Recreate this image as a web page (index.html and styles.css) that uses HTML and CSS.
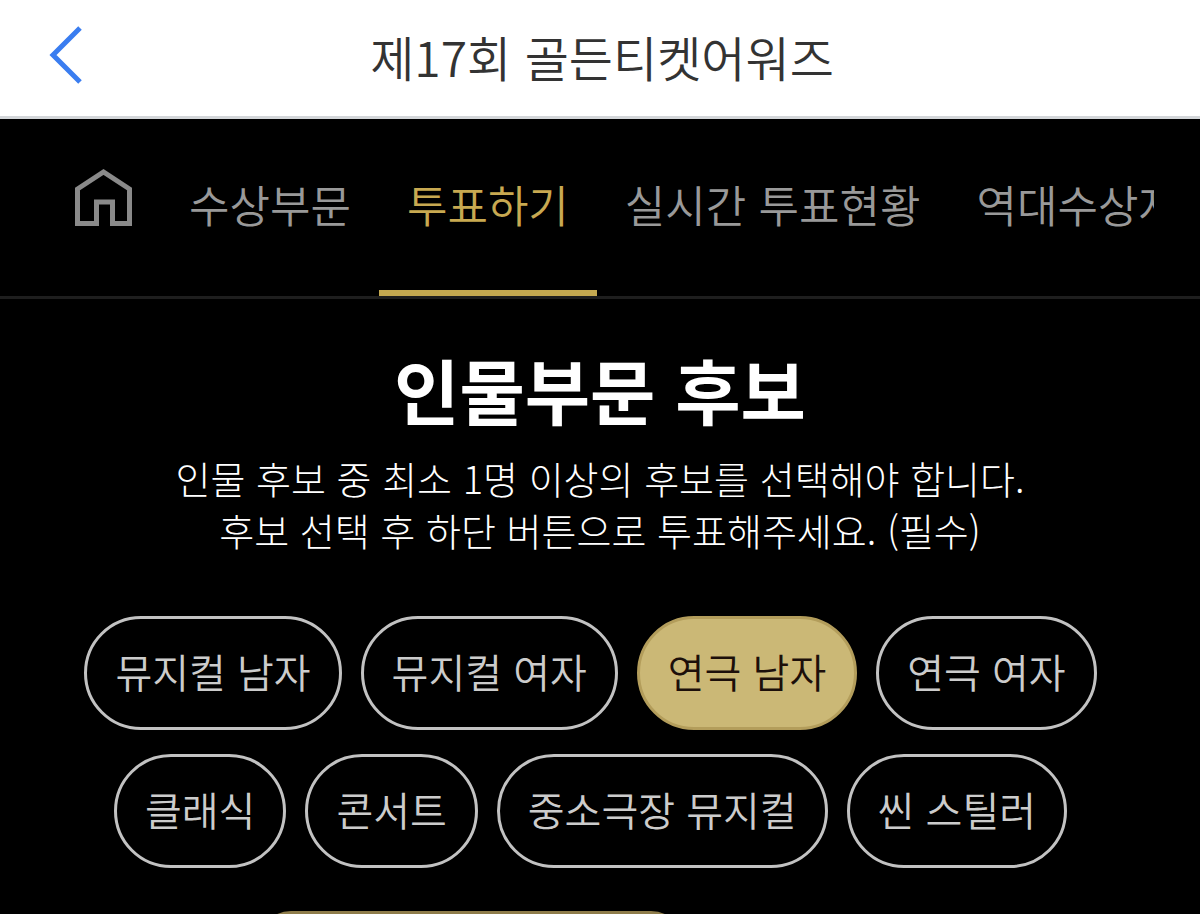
FILE: index.html
```html
<!DOCTYPE html>
<html lang="ko">
<head>
    <meta charset="UTF-8">
    <meta name="viewport" content="width=device-width, initial-scale=1.0">
    <title>제17회 골든티켓어워즈</title>
    <link rel="stylesheet" href="styles.css">
</head>
<body>
    <header class="header">
        <button type="button" class="back" aria-label="뒤로">
            <svg width="36" height="60" viewBox="0 0 36 60" fill="none" stroke="#3a7df0" stroke-width="5">
                <path d="M32 3 L5 30 L32 57"/>
            </svg>
        </button>
        <h1 class="title">제17회 골든티켓어워즈</h1>
    </header>

    <nav class="nav">
        <div class="tabs">
            <a href="#" class="tab" aria-label="홈">
                <svg class="home" width="59" height="60" viewBox="0 0 59 60" fill="none" stroke="#8a8a8a" stroke-width="5">
                    <path d="M3.500 55.500 V21 L29.500 4 L55.500 21 V55.500 H38.500 V34 H22.500 V55.500 Z"/>
                </svg>
            </a>
            <a href="#" class="tab">수상부문</a>
            <a href="#" class="tab active">투표하기</a>
            <a href="#" class="tab">실시간 투표현황</a>
            <a href="#" class="tab">역대수상자</a>
        </div>
    </nav>

    <main class="content">
        <h2 class="heading">인물부문 후보</h2>
        <p class="desc">인물 후보 중 최소 1명 이상의 후보를 선택해야 합니다.<br>후보 선택 후 하단 버튼으로 투표해주세요. (필수)</p>

        <div class="chips">
            <button type="button" class="chip">뮤지컬 남자</button>
            <button type="button" class="chip">뮤지컬 여자</button>
            <button type="button" class="chip selected">연극 남자</button>
            <button type="button" class="chip">연극 여자</button>
            <button type="button" class="chip">클래식</button>
            <button type="button" class="chip">콘서트</button>
            <button type="button" class="chip">중소극장 뮤지컬</button>
            <button type="button" class="chip">씬 스틸러</button>
        </div>

        <div class="cards">
            <div class="card"></div>
        </div>
    </main>
</body>
</html>
```
FILE: styles.css
```css
* {
    box-sizing: border-box;
}

body {
    margin: 0;
    height: 100vh;
    overflow: hidden;
    background: #000;
    color: #fff;
    font-family: "Noto Sans CJK KR", sans-serif;
}

button {
    font-family: inherit;
    cursor: pointer;
}

.header {
    display: grid;
    grid-template-columns: 102px 1fr 98px;
    align-items: center;
    height: 119px;
    background: #fff;
    border-bottom: 3px solid #d3d6d9;
}

.back {
    display: flex;
    justify-self: end;
    margin: 0 18px 6px 0;
    padding: 0;
    border: 0;
    background: none;
}

.title {
    margin: 0;
    padding-bottom: 4px;
    color: #333;
    font-size: 48px;
    font-weight: 350;
    line-height: 72px;
    text-align: center;
}

.nav {
    padding: 0 46px;
    border-bottom: 3px solid #1e1e1e;
}

.tabs {
    display: flex;
    overflow: hidden;
}

.tab {
    display: flex;
    flex: none;
    height: 177px;
    padding: 55px 28px 0;
    border-bottom: 6px solid transparent;
    color: #999;
    font-size: 44px;
    font-weight: 350;
    line-height: 60px;
    text-decoration: none;
    white-space: nowrap;
}

.tab.active {
    border-bottom-color: #c4a850;
    color: #c8a951;
}

.home {
    margin-top: -6px;
}

.content {
    text-align: center;
}

.heading {
    margin: 0;
    padding-top: 36px;
    font-size: 71px;
    font-weight: 700;
    line-height: 106px;
}

.desc {
    margin: 11px 0 0;
    font-size: 38px;
    font-weight: 300;
    line-height: 52px;
}

.chips {
    display: flex;
    flex-wrap: wrap;
    justify-content: center;
    gap: 24px 0;
    margin-top: 60px;
    padding: 0 60px;
}

.chip {
    height: 114px;
    margin-right: 19px;
    padding: 0 28px 4px;
    border: 3px solid #c2c2c2;
    border-radius: 57px;
    background: none;
    color: #ccc;
    font-size: 40px;
    font-weight: 350;
}

.chip.selected {
    border-color: #b39d5b;
    background: #cbb876;
    color: #1c0f0a;
}

.cards {
    display: flex;
    justify-content: center;
    margin-top: 43px;
    padding-right: 258px;
}

.card {
    width: 424px;
    height: 114px;
    border: 3px solid #8f7d4b;
    border-radius: 32px;
    background: #a08d55;
}
```
